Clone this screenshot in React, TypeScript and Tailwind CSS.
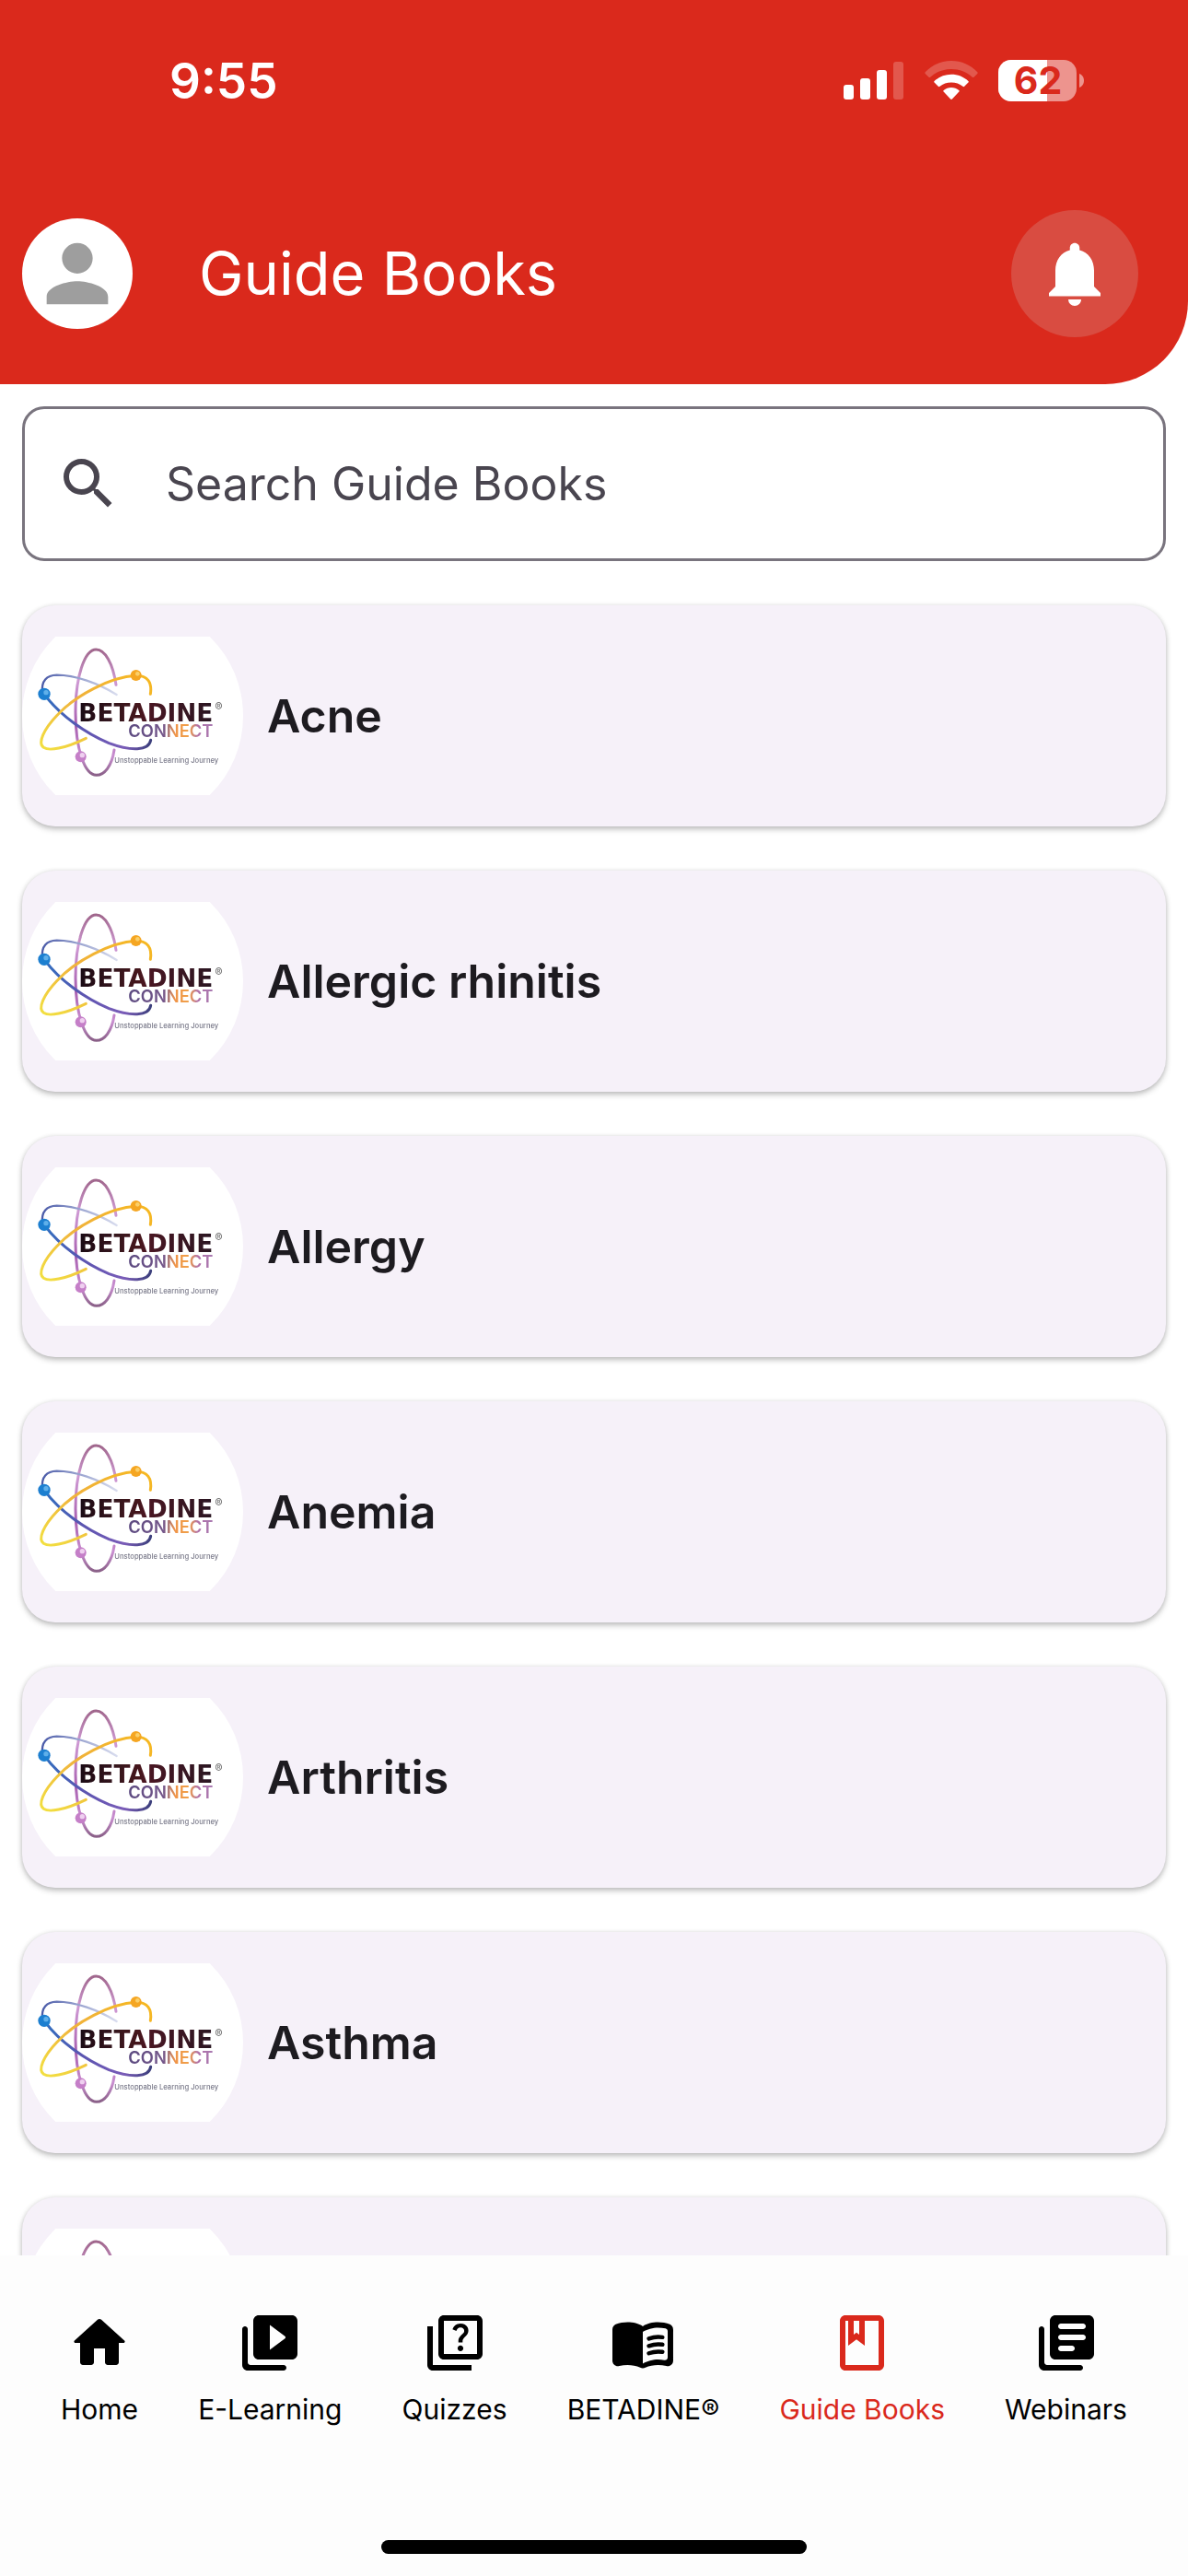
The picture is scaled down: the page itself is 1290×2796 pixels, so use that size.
import type { ReactNode } from "react";
import { MdNotifications, MdOutlineClass, MdOutlineQuiz, MdPerson, MdSearch } from "react-icons/md";

const topics: { title?: string }[] = [
  { title: "Acne" },
  { title: "Allergic rhinitis" },
  { title: "Allergy" },
  { title: "Anemia" },
  { title: "Arthritis" },
  { title: "Asthma" },
  {},
];

function SignalIcon() {
  return (
    <svg width="66" height="43" viewBox="0 0 66 43" fill="white" aria-hidden="true">
      <rect x="0" y="26" width="11" height="16" rx="3" />
      <rect x="18" y="19" width="11" height="23" rx="3" />
      <rect x="36" y="10" width="11" height="32" rx="3" />
      <rect x="54" y="1" width="11" height="41" rx="3" opacity="0.22" />
    </svg>
  );
}

function WifiIcon() {
  return (
    <svg width="58" height="43" viewBox="0 0 58 43" fill="white" aria-hidden="true">
      <path
        opacity="0.22"
        d="M29 0C18 0 8 4.500 .7 12.200c-.5.600-.5 1.200 0 1.700l3.800 3.800c.6.500 1.200.500 1.700 0C12.300 12 20.200 8.900 29 8.900s16.700 3.100 22.800 8.800c.5.500 1.100.500 1.700 0l3.800-3.800c.5-.5.5-1.100 0-1.700C50 4.500 40 0 29 0z"
      />
      <path d="M29 14.700c-7 0-13.500 2.600-18.400 7.200-.6.600-.6 1.200 0 1.700l4.200 4.200c.5.500 1.100.500 1.700 0C19.900 25 24.200 23.500 29 23.500s9.100 1.500 12.500 4.300c.6.500 1.200.500 1.700 0l4.200-4.200c.6-.5.600-1.100 0-1.700C42.500 17.300 36 14.700 29 14.700z" />
      <path d="M29 29c-3.100 0-5.900 1-8.300 2.900-.6.500-.6 1.200-.1 1.700l7.500 7.900c.5.600 1.300.600 1.800 0l7.500-7.900c.5-.5.500-1.200-.1-1.700C34.900 30 32.100 29 29 29z" />
    </svg>
  );
}

function BatteryIcon() {
  return (
    <svg width="94" height="57" viewBox="0 -6 94 57" role="img" aria-label="Battery 62 percent">
      <clipPath id="battery-charge">
        <rect width="53" height="45" />
      </clipPath>
      <rect width="85" height="45" rx="14" fill="white" opacity="0.5" />
      <rect width="85" height="45" rx="14" fill="white" clipPath="url(#battery-charge)" />
      <path d="M88 15c3 1 5 4 5 7.500s-2 6.500-5 7.500z" fill="white" opacity="0.5" />
      <text x="43" y="37" textAnchor="middle" fontSize="41" fontWeight="700" fill="#da291c">
        62
      </text>
    </svg>
  );
}

function BetadineLogo() {
  return (
    <svg viewBox="42 153 720 516" className="w-full" role="img" aria-label="Betadine Connect">
      <defs>
        <linearGradient id="orbit-tall" x1="0" y1="0" x2="0" y2="1">
          <stop offset="0" stopColor="#a0668c" />
          <stop offset="0.25" stopColor="#cf9ad4" />
          <stop offset="0.6" stopColor="#a85fb0" />
          <stop offset="0.85" stopColor="#c98fd0" />
          <stop offset="1" stopColor="#8a6088" />
        </linearGradient>
        <linearGradient id="orbit-blue" x1="0" y1="0" x2="1" y2="0">
          <stop offset="0" stopColor="#2f6fc0" />
          <stop offset="0.35" stopColor="#5a55b0" />
          <stop offset="0.75" stopColor="#7a5cb8" />
          <stop offset="1" stopColor="#3c3f7c" />
        </linearGradient>
        <linearGradient id="orbit-fade" x1="0" y1="0" x2="1" y2="0">
          <stop offset="0" stopColor="#4a5aa8" />
          <stop offset="0.5" stopColor="#9aa4d0" />
          <stop offset="1" stopColor="#d8dcee" />
        </linearGradient>
        <linearGradient id="orbit-gold" x1="0" y1="1" x2="1" y2="0">
          <stop offset="0" stopColor="#f2e040" />
          <stop offset="0.5" stopColor="#f0b23c" />
          <stop offset="1" stopColor="#f6b820" />
        </linearGradient>
        <linearGradient id="word-betadine" x1="0" y1="0" x2="1" y2="0">
          <stop offset="0" stopColor="#1c1016" />
          <stop offset="0.5" stopColor="#4a1420" />
          <stop offset="1" stopColor="#2a1420" />
        </linearGradient>
        <linearGradient id="word-connect" x1="0" y1="0" x2="1" y2="0">
          <stop offset="0" stopColor="#5b4a80" />
          <stop offset="0.42" stopColor="#76588c" />
          <stop offset="0.55" stopColor="#f0954a" />
          <stop offset="0.72" stopColor="#f0a04a" />
          <stop offset="0.82" stopColor="#b070a8" />
          <stop offset="1" stopColor="#a878b0" />
        </linearGradient>
        <filter id="logo-soften" x="-5%" y="-5%" width="110%" height="110%">
          <feGaussianBlur stdDeviation="2.2" />
        </filter>
      </defs>
      <circle cx="402" cy="411" r="360" fill="white" />
      <g filter="url(#logo-soften)" fill="none" strokeLinecap="round">
        <path
          d="M348 310C338 240 312 195 283 195C245 195 216 285 216 400C216 520 246 604 284 604C310 604 334 575 342 522"
          stroke="url(#orbit-tall)"
          strokeWidth="9"
        />
        <path d="M350 342C290 305 215 278 155 278C122 279 104 296 108 335" stroke="url(#orbit-fade)" strokeWidth="7" />
        <path d="M114 340C165 410 250 468 325 500C395 526 455 526 461 490" stroke="url(#orbit-blue)" strokeWidth="9" />
        <path
          d="M460 340C466 300 450 280 413 280C330 284 215 345 155 410C112 455 92 500 112 514C130 526 180 518 250 484"
          stroke="url(#orbit-gold)"
          strokeWidth="9"
        />
        <circle cx="114" cy="340" r="20" fill="#1f7fd0" />
        <circle cx="120" cy="335" r="8" fill="#5fb0ea" />
        <circle cx="413" cy="279" r="18" fill="#f5a623" />
        <circle cx="418" cy="274" r="7" fill="#fbd06a" />
        <circle cx="233" cy="544" r="18" fill="#c57fc8" />
        <circle cx="238" cy="539" r="8" fill="#efd0f0" />
      </g>
      <g filter="url(#logo-soften)">
        <text
          x="226"
          y="429"
          fontSize="79"
          fontWeight="700"
          fill="url(#word-betadine)"
          className="font-['DejaVu_Sans',sans-serif]"
        >
          BETADINE
        </text>
        <text x="670" y="396" fontSize="38" fontWeight="600" fill="#777777">
          ®
        </text>
        <text x="388" y="481" fontSize="55" fontWeight="600" fill="url(#word-connect)">
          CONNECT
        </text>
        <text x="343" y="565" fontSize="23" fontWeight="500" fill="#7a7a8a">
          Unstoppable Learning Journey
        </text>
      </g>
    </svg>
  );
}

function TopicCard({ title }: { title?: string }) {
  return (
    <li>
      <a
        href="#topic"
        className="flex h-60 items-center gap-[26px] rounded-[36px] bg-[#f6f1f9] shadow-[0_3px_6px_rgba(0,0,0,0.25),0_0_5px_rgba(0,0,0,0.08)]"
      >
        <div className="w-60 shrink-0">
          <BetadineLogo />
        </div>
        {title && <span className="text-[50px] leading-[60px] font-semibold text-[#1d1b20]">{title}</span>}
      </a>
    </li>
  );
}

function NavIcon({ children }: { children: ReactNode }) {
  return (
    <svg viewBox="0 0 24 24" className="size-18" fill="currentColor" aria-hidden="true">
      {children}
    </svg>
  );
}

const stackEdge =
  "M3 6c-.55 0-1 .45-1 1v13c0 1.100.9 2 2 2h13c.55 0 1-.45 1-1s-.45-1-1-1H5c-.55 0-1-.45-1-1V7c0-.55-.45-1-1-1z";

const navItems: { label: string; icon: ReactNode; active?: boolean }[] = [
  {
    label: "Home",
    icon: (
      <NavIcon>
        <path d="M10 19v-5h4v5c0 .55.45 1 1 1h3c.55 0 1-.45 1-1v-7h1.700c.46 0 .68-.57.33-.87L12.670 3.600c-.38-.34-.96-.34-1.340 0l-8.360 7.530c-.34.3-.13.87.33.87H5v7c0 .55.45 1 1 1h3c.55 0 1-.45 1-1z" />
      </NavIcon>
    ),
  },
  {
    label: "E-Learning",
    icon: (
      <NavIcon>
        <path d={stackEdge} />
        <path d="M20 2H8c-1.100 0-2 .9-2 2v12c0 1.100.9 2 2 2h12c1.100 0 2-.9 2-2V4c0-1.100-.9-2-2-2zm-8 12.500v-9l5.470 4.100c.27.2.27.6 0 .8L12 14.500z" />
      </NavIcon>
    ),
  },
  { label: "Quizzes", icon: <MdOutlineQuiz className="size-18" aria-hidden="true" /> },
  {
    label: "BETADINE®",
    icon: (
      <NavIcon>
        <path d="M17.500 4.500c-1.950 0-4.050.4-5.500 1.500-1.450-1.100-3.550-1.500-5.500-1.500-1.450 0-2.990.22-4.280.79C1.490 5.620 1 6.330 1 7.140v11.280c0 1.300 1.220 2.260 2.480 1.940.98-.25 2.020-.36 3.020-.36 1.560 0 3.220.26 4.560.92.6.3 1.280.3 1.870 0 1.340-.67 3-.92 4.560-.92 1 0 2.040.11 3.020.36 1.260.33 2.480-.63 2.480-1.940V7.140c0-.81-.49-1.520-1.220-1.850-1.280-.57-2.820-.79-4.270-.79zM21 17.230c0 .63-.58 1.090-1.200.98-.75-.14-1.530-.2-2.300-.2-1.700 0-4.150.65-5.500 1.500V8c1.350-.85 3.800-1.500 5.500-1.500.92 0 1.830.09 2.700.28.46.1.8.51.8.98v9.470z" />
        <path
          d="M14.200 10.450c1.500-.55 3.300-.75 4.900-.5M14.200 13.100c1.500-.55 3.300-.75 4.900-.5M14.200 15.750c1.500-.55 3.300-.75 4.900-.5"
          fill="none"
          stroke="currentColor"
          strokeWidth="1.500"
          strokeLinecap="round"
        />
      </NavIcon>
    ),
  },
  { label: "Guide Books", icon: <MdOutlineClass className="size-18" aria-hidden="true" />, active: true },
  {
    label: "Webinars",
    icon: (
      <NavIcon>
        <path d={stackEdge} />
        <path d="M20 2H8c-1.100 0-2 .9-2 2v12c0 1.100.9 2 2 2h12c1.100 0 2-.9 2-2V4c0-1.100-.9-2-2-2zm-2 9h-8c-.55 0-1-.45-1-1s.45-1 1-1h8c.55 0 1 .45 1 1s-.45 1-1 1zm-4 4h-4c-.55 0-1-.45-1-1s.45-1 1-1h4c.55 0 1 .45 1 1s-.45 1-1 1zm4-8h-8c-.55 0-1-.45-1-1s.45-1 1-1h8c.55 0 1 .45 1 1s-.45 1-1 1z" />
      </NavIcon>
    ),
  },
];

export default function App() {
  return (
    <div className="flex h-screen flex-col bg-white font-['Inter','Liberation_Sans',sans-serif]">
      <header className="shrink-0 rounded-br-[90px] bg-[#da291c] pb-[51px] text-white">
        <div className="flex h-[228px] items-start justify-between pt-14 pr-28 pl-[184px]">
          <time className="text-[53px] leading-16 font-semibold">9:55</time>
          <div className="flex h-[62px] items-center gap-[22px]">
            <SignalIcon />
            <WifiIcon />
            <BatteryIcon />
          </div>
        </div>
        <div className="flex items-center pr-[54px] pl-6">
          <button
            type="button"
            aria-label="Profile"
            className="flex size-30 items-center justify-center rounded-full bg-white text-[#9e9e9e]"
          >
            <MdPerson className="size-[100px]" />
          </button>
          <h1 className="ml-18 flex-1 text-[65px] leading-20 font-normal">Guide Books</h1>
          <button
            type="button"
            aria-label="Notifications"
            className="flex size-[138px] items-center justify-center rounded-full bg-[#d94c41]"
          >
            <MdNotifications className="size-[84px]" />
          </button>
        </div>
      </header>

      <main className="flex min-h-0 flex-1 flex-col">
        <div className="shrink-0 px-6 pt-6">
          <label className="flex h-42 items-center gap-12 rounded-3xl border-3 border-[#79747e] px-[33px] text-[#49454f]">
            <MdSearch className="size-18 shrink-0" aria-hidden="true" />
            <input
              type="search"
              aria-label="Search Guide Books"
              placeholder="Search Guide Books"
              className="min-w-0 flex-1 bg-transparent text-[50px] leading-[60px] outline-none placeholder:text-[#49454f]"
            />
          </label>
        </div>
        <ul className="mt-6 flex min-h-0 flex-1 flex-col gap-12 overflow-y-auto px-6 pt-6 [scrollbar-width:none]">
          {topics.map((topic, index) => (
            <TopicCard key={index} title={topic.title} />
          ))}
        </ul>
      </main>

      <nav className="shrink-0 bg-[#fdfdfd] pt-[59px] pb-6">
        <ul className="flex justify-between px-[66px]">
          {navItems.map((item) => (
            <li key={item.label}>
              <a
                href="#tab"
                aria-current={item.active ? "page" : undefined}
                className={
                  item.active
                    ? "flex flex-col items-center gap-4 text-[#da291c]"
                    : "flex flex-col items-center gap-4 text-black"
                }
              >
                {item.icon}
                <span className="text-[30px] leading-10">{item.label}</span>
              </a>
            </li>
          ))}
        </ul>
        <div className="mx-auto mt-[122px] h-[15px] w-[462px] rounded-full bg-black" />
      </nav>
    </div>
  );
}
